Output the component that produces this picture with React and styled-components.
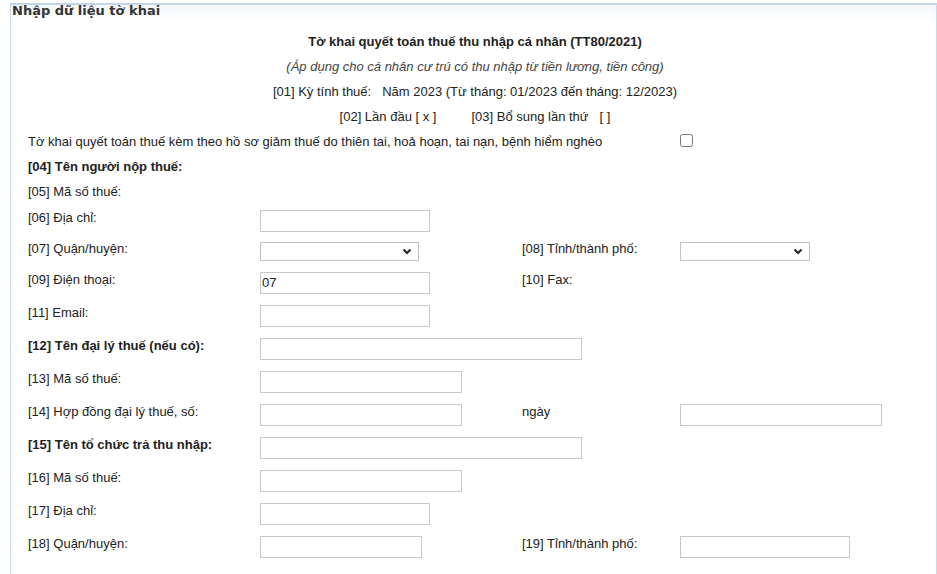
import React from "react";
import styled, { createGlobalStyle } from "styled-components";

const GlobalStyle = createGlobalStyle`
  body {
    margin: 0;
    background: #fff;
    font-family: "Liberation Sans", Arial, sans-serif;
    color: #222;
  }
`;

const Panel = styled.section`
  margin: 3px 0 0 10px;
  width: 927px;
  box-sizing: border-box;
  border: 1px solid #cbd9ed;
  border-top: 2px solid #c4d4ea;
  border-bottom: none;
  height: 571px;
`;

const PanelHeader = styled.div`
  height: 14px;
  line-height: 12px;
  padding-left: 1px;
  background: linear-gradient(#f6f9fd, #fcfdff);
  font-family: "DejaVu Sans", Verdana, sans-serif;
  font-weight: bold;
  font-size: 13px;
  color: #333;
`;

const Body = styled.div`
  padding-top: 10px;
`;

const CenterLine = styled.div`
  height: 25px;
  display: flex;
  justify-content: center;
  align-items: center;
  gap: ${(p) => p.$gap || 0}px;
  font-size: 13px;
  font-weight: ${(p) => (p.$bold ? "bold" : "normal")};
  font-style: ${(p) => (p.$italic ? "italic" : "normal")};
  color: ${(p) => (p.$italic ? "#444" : "#222")};
  padding-left: 3px;
`;

const Gap = styled.span`
  display: inline-block;
  width: ${(p) => p.$w}px;
`;

const Form = styled.div`
  padding-left: 17px;
`;

const Row = styled.div`
  display: grid;
  grid-template-columns: 232px 262px 158px 1fr;
  align-items: center;
  height: ${(p) => p.$h || 33}px;
`;

const Label = styled.div`
  font-size: 13px;
  font-weight: ${(p) => (p.$bold ? "bold" : "normal")};
  color: #222;
  padding-bottom: ${(p) => (p.$flat ? 0 : 6)}px;
  white-space: nowrap;
  grid-column: ${(p) => p.$span || "auto"};
`;

const Field = styled.input`
  box-sizing: border-box;
  width: ${(p) => p.$w}px;
  height: 22px;
  margin: 0;
  border: 1px solid #c8c8c8;
  padding: 0 1px;
  font-family: "Liberation Sans", Arial, sans-serif;
  font-size: 13px;
  color: #222;
  outline: none;
  background: #fff;
`;

const SelectBox = styled.div`
  box-sizing: border-box;
  width: ${(p) => p.$w}px;
  height: 19px;
  border: 1px solid #c2c2c2;
  display: flex;
  align-items: center;
  justify-content: flex-end;
  padding-right: 6px;
  background: #fff;
`;

const Check = styled.input`
  margin: 0 0 2px 0;
  width: 13px;
  height: 13px;
`;

const Cell = styled.div``;

const Chevron = () => (
  <svg width="10" height="7" viewBox="0 0 10 7">
    <path d="M1.5 1.5L5 5l3.5-3.5" fill="none" stroke="#222" strokeWidth="2" />
  </svg>
);

function FieldRow({ label, bold, w, value, label2, w2, select, select2, h }) {
  return (
    <Row $h={h}>
      <Label $bold={bold}>{label}</Label>
      <Cell>
        {select ? <SelectBox $w={w}><Chevron /></SelectBox> : w ? <Field $w={w} defaultValue={value} /> : null}
      </Cell>
      <Label>{label2}</Label>
      <Cell>
        {select2 ? <SelectBox $w={w2}><Chevron /></SelectBox> : w2 ? <Field $w={w2} /> : null}
      </Cell>
    </Row>
  );
}

export default function App() {
  return (
    <>
      <GlobalStyle />
      <Panel>
        <PanelHeader>Nhập dữ liệu tờ khai</PanelHeader>
        <Body>
          <CenterLine $bold>Tờ khai quyết toán thuế thu nhập cá nhân (TT80/2021)</CenterLine>
          <CenterLine $italic>(Áp dụng cho cá nhân cư trú có thu nhập từ tiền lương, tiền công)</CenterLine>
          <CenterLine>
            [01] Kỳ tính thuế:<Gap $w={11} />Năm 2023 (Từ tháng: 01/2023 đến tháng: 12/2023)
          </CenterLine>
          <CenterLine $gap={35}>
            <span>[02] Lần đầu [ x ]</span>
            <span>[03] Bổ sung lần thứ<Gap $w={11} />[ ]</span>
          </CenterLine>
          <Form>
            <Row $h={25}>
              <Label $flat $span="1 / 4">
                Tờ khai quyết toán thuế kèm theo hồ sơ giảm thuế do thiên tai, hoả hoạn, tai nạn, bệnh hiểm nghèo
              </Label>
              <Cell>
                <Check type="checkbox" />
              </Cell>
            </Row>
            <Row $h={25}>
              <Label $flat $bold>[04] Tên người nộp thuế:</Label>
            </Row>
            <Row $h={25}>
              <Label $flat>[05] Mã số thuế:</Label>
            </Row>
            <FieldRow label="[06] Địa chỉ:" w={170} />
            <FieldRow label="[07] Quận/huyện:" w={159} select label2="[08] Tỉnh/thành phố:" w2={130} select2 h={29} />
            <FieldRow label="[09] Điện thoại:" w={170} value="07" label2="[10] Fax:" />
            <FieldRow label="[11] Email:" w={170} />
            <FieldRow label="[12] Tên đại lý thuế (nếu có):" bold w={322} />
            <FieldRow label="[13] Mã số thuế:" w={202} />
            <FieldRow label="[14] Hợp đồng đại lý thuế, số:" w={202} label2="ngày" w2={202} />
            <FieldRow label="[15] Tên tổ chức trả thu nhập:" bold w={322} />
            <FieldRow label="[16] Mã số thuế:" w={202} />
            <FieldRow label="[17] Địa chỉ:" w={170} />
            <FieldRow label="[18] Quận/huyện:" w={162} label2="[19] Tỉnh/thành phố:" w2={170} />
          </Form>
        </Body>
      </Panel>
    </>
  );
}
